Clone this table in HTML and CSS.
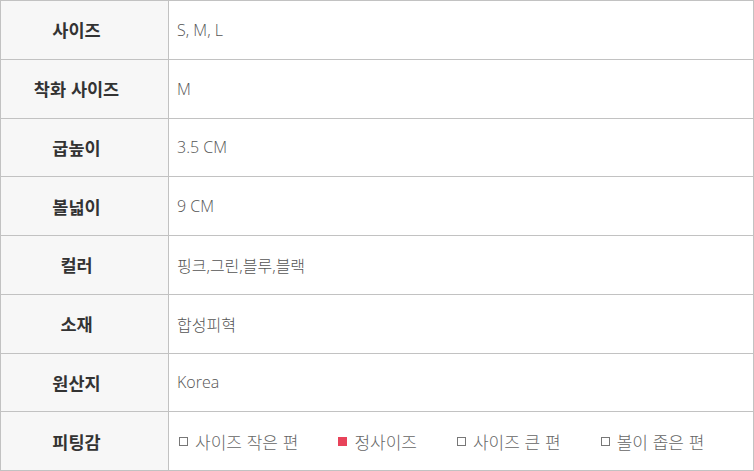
FILE: index.html
```html
<!DOCTYPE html>
<html lang="ko">
<head>
    <meta charset="UTF-8">
    <meta name="viewport" content="width=device-width, initial-scale=1.0">
    <title>상품 정보</title>
    <link rel="stylesheet" href="styles.css">
</head>
<body>
    <table class="info">
        <tr>
            <th>사이즈</th>
            <td>S, M, L</td>
        </tr>
        <tr>
            <th>착화 사이즈</th>
            <td>M</td>
        </tr>
        <tr>
            <th>굽높이</th>
            <td>3.5 CM</td>
        </tr>
        <tr>
            <th>볼넓이</th>
            <td>9 CM</td>
        </tr>
        <tr>
            <th>컬러</th>
            <td>핑크,그린,블루,블랙</td>
        </tr>
        <tr>
            <th>소재</th>
            <td>합성피혁</td>
        </tr>
        <tr>
            <th>원산지</th>
            <td>Korea</td>
        </tr>
        <tr>
            <th>피팅감</th>
            <td>
                <div class="fit">
                    <span class="opt"><i class="box"></i>사이즈 작은 편</span>
                    <span class="opt"><i class="box on"></i>정사이즈</span>
                    <span class="opt"><i class="box"></i>사이즈 큰 편</span>
                    <span class="opt"><i class="box"></i>볼이 좁은 편</span>
                </div>
            </td>
        </tr>
    </table>
</body>
</html>
```

FILE: styles.css
```css
html, body {
    margin: 0;
    padding: 0;
    background: #fff;
}
body {
    font-family: "Open Sans", "Noto Sans CJK KR", sans-serif;
}
.info {
    width: 754px;
    height: 471px;
    border-collapse: collapse;
    table-layout: fixed;
}
.info th, .info td {
    border: 1px solid #c2c2c2;
    padding: 0;
}
.info th {
    width: 151px;
    padding-right: 16px;
    background-color: #f7f7f7;
    color: #333;
    font-family: "Noto Sans CJK KR", sans-serif;
    font-size: 17.5px;
    font-weight: bold;
    text-align: center;
}
.info td {
    padding-left: 8px;
    color: #555;
    font-size: 16px;
    font-weight: 300;
}
.fit {
    display: flex;
    align-items: center;
    gap: 40px;
    padding-left: 2px;
    color: #666;
    font-family: "Noto Sans CJK KR", sans-serif;
    font-size: 17px;
}
.opt {
    display: flex;
    align-items: center;
    gap: 7px;
}
.box {
    display: inline-block;
    width: 9px;
    height: 9px;
    border: 1px solid #777;
    box-sizing: border-box;
}
.box.on {
    border: none;
    background-color: #e8435a;
}
```
